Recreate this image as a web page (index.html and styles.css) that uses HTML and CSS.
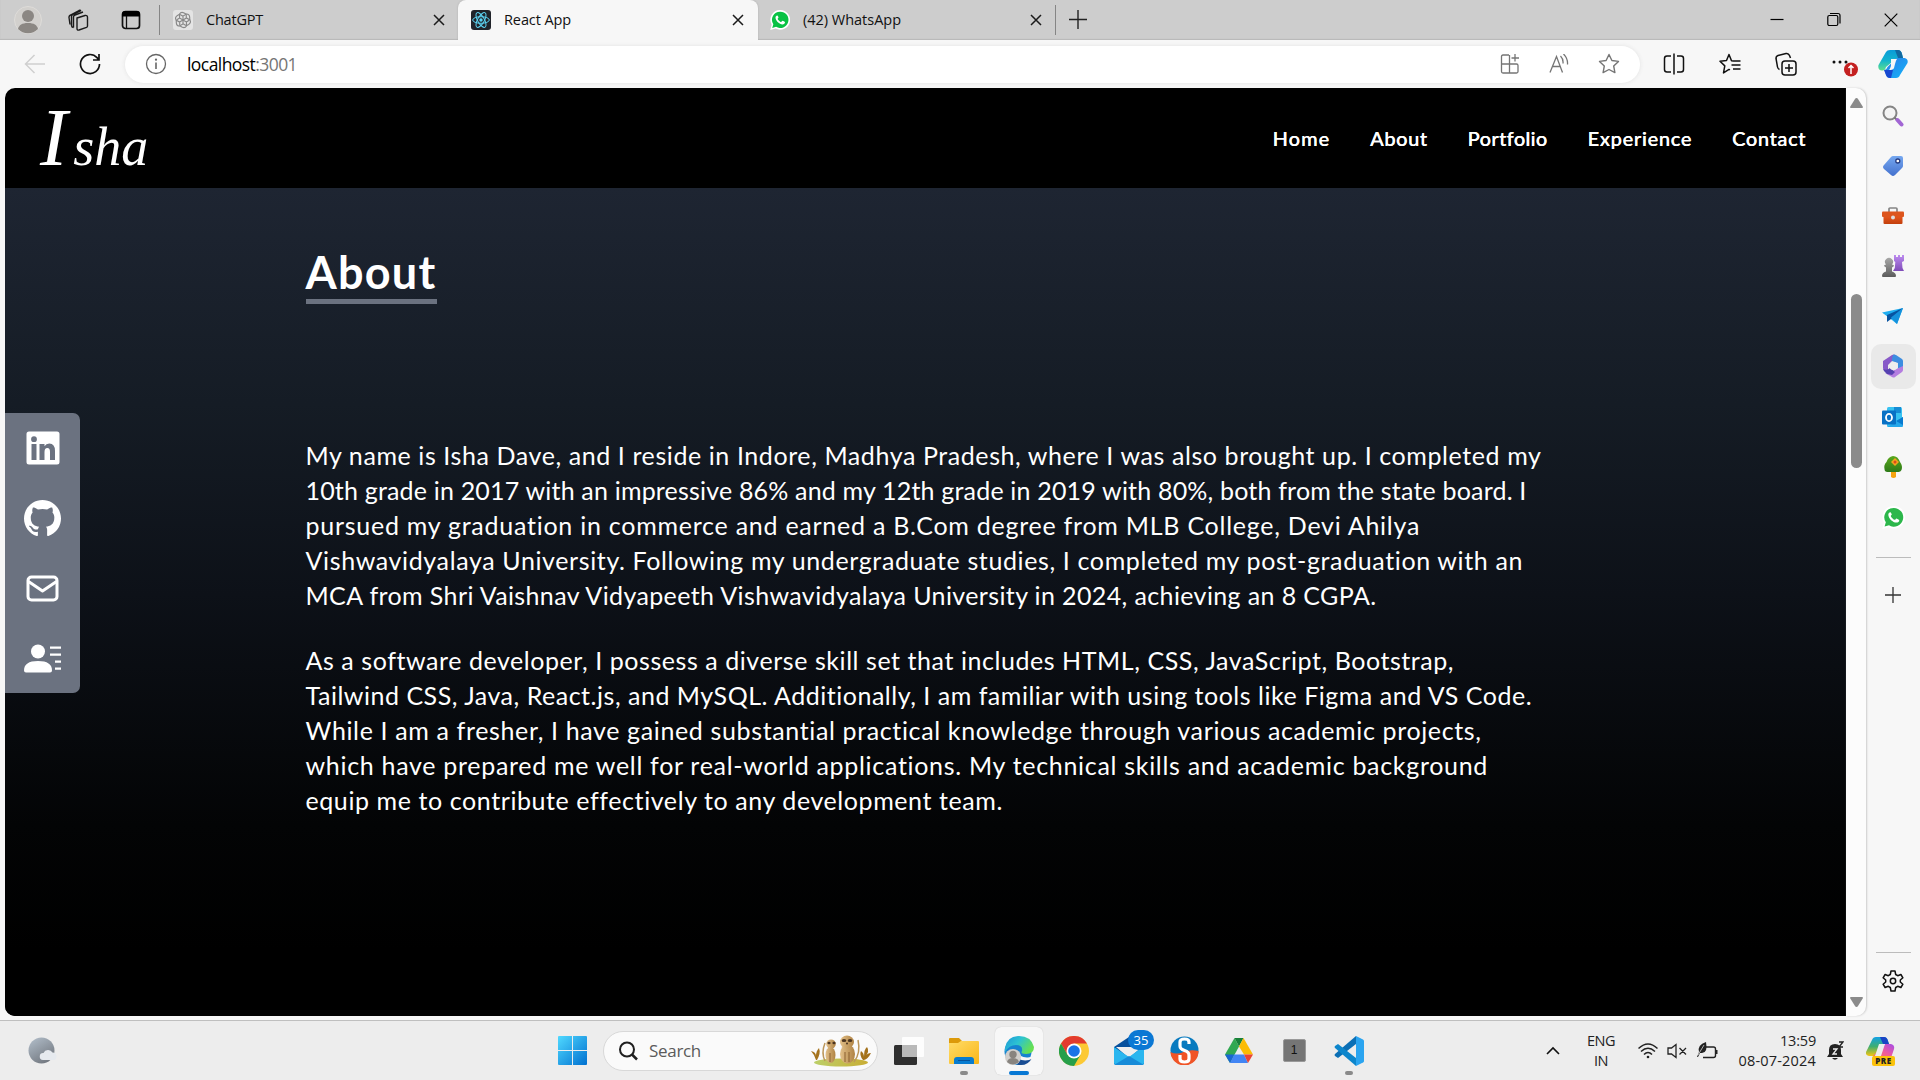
FILE: index.html
```html
<!DOCTYPE html>
<html lang="en">
<head>
<meta charset="utf-8">
<title>React App</title>
<link rel="stylesheet" href="styles.css">
</head>
<body>
<svg class="defs" width="0" height="0" aria-hidden="true">
  <defs>
    <linearGradient id="gBlue" x1="0" y1="0" x2="1" y2="1"><stop offset="0" stop-color="#50d9ff"/><stop offset="1" stop-color="#0070d0"/></linearGradient>
    <linearGradient id="gCop1" x1="0" y1="0" x2="0" y2="1"><stop offset="0" stop-color="#0a9bd8"/><stop offset=".5" stop-color="#12b3cf"/><stop offset="1" stop-color="#5fe08a"/></linearGradient>
    <linearGradient id="gCop2" x1="0" y1="0" x2="1" y2="1"><stop offset="0" stop-color="#2a7be8"/><stop offset="1" stop-color="#14b4f8"/></linearGradient>
    <linearGradient id="gPre1" x1="0" y1="0" x2="0" y2="1"><stop offset="0" stop-color="#12a0e4"/><stop offset=".5" stop-color="#3fae70"/><stop offset="1" stop-color="#f5c510"/></linearGradient>
    <linearGradient id="gPre2" x1="1" y1="0" x2="0" y2="1"><stop offset="0" stop-color="#a34be8"/><stop offset=".5" stop-color="#ee5aa0"/><stop offset="1" stop-color="#ff7a50"/></linearGradient>
    <linearGradient id="gTag" x1="0" y1="0" x2="0" y2="1"><stop offset="0" stop-color="#76a8f0"/><stop offset="1" stop-color="#4471ce"/></linearGradient>
    <linearGradient id="gBox" x1="0" y1="0" x2="0" y2="1"><stop offset="0" stop-color="#ea5a20"/><stop offset="1" stop-color="#c23f0c"/></linearGradient>
    <linearGradient id="gPawn" x1="0" y1="0" x2="0" y2="1"><stop offset="0" stop-color="#a8a8a8"/><stop offset="1" stop-color="#5c5c5c"/></linearGradient>
    <linearGradient id="gRook" x1="0" y1="0" x2="0" y2="1"><stop offset="0" stop-color="#bd8cf0"/><stop offset="1" stop-color="#7f4cb8"/></linearGradient>
    <linearGradient id="gMoon" x1="0" y1="0" x2=".6" y2="1"><stop offset="0" stop-color="#b4c0cc"/><stop offset="1" stop-color="#747a82"/></linearGradient>
    <linearGradient id="gFold" x1="0" y1="0" x2="1" y2="1"><stop offset="0" stop-color="#ffdc68"/><stop offset="1" stop-color="#f9b617"/></linearGradient>
    <linearGradient id="gEdge" x1="0" y1="0" x2="1" y2=".5"><stop offset="0" stop-color="#1d94d8"/><stop offset=".5" stop-color="#2cc3d2"/><stop offset="1" stop-color="#66e052"/></linearGradient>
    <linearGradient id="gTree" x1="0" y1="0" x2="0" y2="1"><stop offset="0" stop-color="#5aa81c"/><stop offset="1" stop-color="#2d7a18"/></linearGradient>
    <linearGradient id="gGrass" x1="0" y1="0" x2="1" y2="0"><stop offset="0" stop-color="#bcd06a"/><stop offset="1" stop-color="#c9ad35"/></linearGradient>
    <linearGradient id="gFur" x1="0" y1="0" x2="1" y2="0"><stop offset="0" stop-color="#e2c08a"/><stop offset="1" stop-color="#b08344"/></linearGradient>
    <symbol id="whatsapp" viewBox="0 0 24 24"><path fill="#fff" d="M12.3 0A11.700 11.700 0 0 0 2 17.500L.3 24l6.500-1.800A11.800 11.800 0 1 0 12.300 0z"/><path fill="currentColor" d="M12.300 2A9.700 9.700 0 0 0 4 17l-1.300 4.500L7.300 20.200A9.800 9.800 0 1 0 12.300 2z"/><path fill="#fff" d="M8.700 6.600c-.7-.2-2.200 1-2.100 2.700.3 3.800 4.700 7.800 8.300 8 1.800 0 3.200-1.100 3.100-2.500-.1-.6-2.500-1.800-3-1.800-.6 0-1 1.400-1.600 1.400-1.200 0-4.200-2.800-4.200-4 0-.5 1-1 1-1.500S9.200 6.700 8.700 6.600z"/></symbol>
    <symbol id="close" viewBox="0 0 14 14"><path d="M2 2l10 10M12 2L2 12" fill="none" stroke="#1b1b1b" stroke-width="1.500"/></symbol>
  </defs>
</svg>

<div class="window">
  <header class="tabs">
    <div class="tab-tools">
      <svg width="28" height="28" viewBox="0 0 28 28"><circle cx="14" cy="14" r="13.500" fill="#d2d0cd" stroke="#dedcd9"/><circle cx="14" cy="10" r="6" fill="#8b8783"/><path d="M4 23c1-4 4-6 10-6s9 2 10 6a14 14 0 0 1-20 0z" fill="#8b8783"/></svg>
      <svg width="22" height="22" viewBox="0 0 22 22" fill="none" stroke="#1b1b1b" stroke-width="1.400"><path d="M10 9l8-2.500q2.500-.5 2.500 1.800V17q0 1-1 1.400L12 21q-2 .5-2-1.500zM6.500 18.500V8q0-1.500 1.500-2l8-3M3 15.500l-1-7q-.2-1.700 1.500-2.500L12 1.500q1-.5 2 .3M6.500 18.500q-2-.2-2-2V7.500Q4.500 6 6 5.300L14 1.500"/></svg>
      <svg width="20" height="20" viewBox="0 0 20 20"><rect x="1.500" y="1.500" width="17" height="17" rx="3" fill="none" stroke="#111" stroke-width="1.700"/><path d="M1 6.500V4q0-3 3-3h12q3 0 3 3v2.500z" fill="#000"/><path d="M5.500 6v12" stroke="#111" stroke-width="1.300"/></svg>
    </div>
    <div class="tab tab-first">
      <svg width="20" height="20" viewBox="0 0 20 20"><rect width="20" height="20" rx="3" fill="#e4e4e4"/><g fill="none" stroke="#888" stroke-width="1.150" id="petals"><path id="petal" d="M10 10V6l3.500-2q3 0 3.200 3.400V10M10 6.200L7 4.500"/><use href="#petal" transform="rotate(60 10 10)"/><use href="#petal" transform="rotate(120 10 10)"/><use href="#petal" transform="rotate(180 10 10)"/><use href="#petal" transform="rotate(240 10 10)"/><use href="#petal" transform="rotate(300 10 10)"/></g></svg>
      <span class="tab-title"><span data-w="57">ChatGPT</span></span>
      <svg width="14" height="14"><use href="#close"/></svg>
    </div>
    <div class="tab tab-active">
      <svg width="20" height="20" viewBox="0 0 20 20"><rect width="20" height="20" rx="3" fill="#20232a"/><g fill="none" stroke="#5bd3f3" stroke-width="1"><ellipse cx="10" cy="10" rx="8.300" ry="3.300"/><ellipse cx="10" cy="10" rx="8.300" ry="3.300" transform="rotate(60 10 10)"/><ellipse cx="10" cy="10" rx="8.300" ry="3.300" transform="rotate(120 10 10)"/></g><circle cx="10" cy="10" r="1.700" fill="#5bd3f3"/></svg>
      <span class="tab-title"><span data-w="67">React App</span></span>
      <svg width="14" height="14"><use href="#close"/></svg>
    </div>
    <div class="tab tab-last">
      <svg class="wa" width="20" height="20"><use href="#whatsapp"/></svg>
      <span class="tab-title"><span data-w="98">(42) WhatsApp</span></span>
      <svg width="14" height="14"><use href="#close"/></svg>
    </div>
    <svg class="new-tab" width="20" height="20" viewBox="0 0 20 20"><path d="M1 9.500h18M10 0v19" stroke="#222" stroke-width="1.400"/></svg>
    <div class="controls">
      <svg width="14" height="18" viewBox="0 0 14 18"><path d="M.5 8.500h13" stroke="#000" stroke-width="1.200"/></svg>
      <svg width="14" height="18" viewBox="0 0 14 18" fill="none" stroke="#000" stroke-width="1.200"><rect x=".8" y="4.500" width="10" height="10" rx="1.500"/><path d="M3 2.500h8q2 0 2 2v8"/></svg>
      <svg width="14" height="18" viewBox="0 0 14 18"><path d="M.7 2.700l12.600 12.600M13.300 2.700L.7 15.300" stroke="#000" stroke-width="1.200"/></svg>
    </div>
  </header>

  <div class="toolbar">
    <svg class="back" width="22" height="20" viewBox="0 0 22 20" fill="none" stroke="#cfcfcf" stroke-width="1.500"><path d="M21 10H1.500M10.500 1l-9 9 9 9"/></svg>
    <svg class="reload" width="22" height="22" viewBox="0 0 22 22" fill="none" stroke="#111" stroke-width="1.700"><path d="M20.500 11A9.500 9.500 0 1 1 18 4.600L20 7M20 1v6h-6"/></svg>
    <div class="address">
      <svg width="22" height="22" viewBox="0 0 22 22" fill="none" stroke="#666" stroke-width="1.300"><circle cx="11" cy="11" r="9.500"/><path d="M11 9.500V16" stroke-width="1.600"/><circle cx="11" cy="6.700" r=".5"/></svg>
      <span class="url"><span data-w="110">localhost<i>:3001</i></span></span>
      <span class="address-icons">
        <svg width="20" height="20" viewBox="0 0 20 20" fill="none" stroke="#757575" stroke-width="1.300"><path d="M9 1H3Q1.500 1 1.500 2.500v15Q1.500 19 3 19h13.500q1.500 0 1.500-1.500v-6q0-1.500-1.500-1.500h-15M9.500 1v18M15 0v7.500M11.500 4h7.500"/></svg>
        <svg width="20" height="20" viewBox="0 0 20 20" fill="none" stroke="#757575" stroke-width="1.300"><path d="M1 18.500L7.500 2.500l6 16M3.500 12.500h8M11.500 2q3 3 2.500 7.500M14.500 0q4.500 4.500 4 10.500"/></svg>
        <svg width="22" height="22" viewBox="0 0 22 22" fill="none" stroke="#757575" stroke-width="1.400" stroke-linejoin="round"><path d="M11 1.500l2.900 6 6.600.9-4.800 4.600 1.200 6.600-5.900-3.100-5.900 3.100L6.300 13 1.500 8.400l6.600-.9z"/></svg>
      </span>
    </div>
    <div class="actions">
      <svg width="22" height="22" viewBox="0 0 22 22" fill="none" stroke="#111" stroke-width="1.500"><path d="M8 3H4Q1.500 3 1.500 5.500v11Q1.500 19 4 19h4M14 3h4q2.500 0 2.500 2.500v11Q20.500 19 18 19h-4M11 .500v21"/></svg>
      <svg width="22" height="22" viewBox="0 0 22 22" fill="none" stroke="#111" stroke-width="1.500" stroke-linejoin="round"><path d="M14.500 8l-2-.3L10 1.500 7.500 7.500l-6.500.8 4.800 4.600-1.300 7 5.500-3.500 1 .5M14 8h7.500M12.500 12h9M14 16h7.500"/></svg>
      <svg width="22" height="24" viewBox="0 0 22 24" fill="none" stroke="#111" stroke-width="1.500"><rect x="7" y="9" width="14" height="14" rx="3"/><path d="M14 12v8M10 16h8M4.500 17.500q-1.700-.7-2-2.500L1 6.500Q.8 4.300 3 3.500l8-2q2.500-.5 3.500 2L15.500 6"/></svg>
      <svg class="more" width="30" height="30" viewBox="0 0 30 30"><g fill="#111"><circle cx="6" cy="13" r="1.500"/><circle cx="12" cy="13" r="1.500"/><circle cx="18" cy="13" r="1.500"/></g><circle cx="23" cy="20.500" r="7" fill="#c42020"/><path d="M23 25v-8M20.500 19l2.500-2.500 2.500 2.500" fill="none" stroke="#fff" stroke-width="1.500"/></svg>
      <svg width="30" height="30" viewBox="0 0 30 30"><path d="M8 3Q9 1 12 1h8q3 0 4 4l1 4h-6L8 18q-1 4-4 3.500Q-.5 21 .500 16z" fill="url(#gCop1)"/><path d="M17 1h3q3 0 4 4l1 4h-5z" fill="#1168a0"/><path d="M22 26q-1 3-4 3H12q-3 0-4-3L6.500 21q2 0 3-3l9-9h8q4 1 3 5z" fill="url(#gCop2)"/><path d="M6 21h9l-2 8h-1q-3 0-4-3z" fill="#1748d0"/><path d="M13 10h6q-1 1-2 5l-1 4q-1 2-5 2 1-1 2-4z" fill="#f7f7f7"/></svg>
    </div>
  </div>

  <div class="body">
    <main class="page">
      <nav class="navbar">
        <div class="logo"><span class="logo-cap">I</span><span>sha</span></div>
        <ul class="links">
          <li data-w="57.5">Home</li><li data-w="57.500">About</li><li data-w="79.500">Portfolio</li><li data-w="104.500">Experience</li><li data-w="74">Contact</li>
        </ul>
      </nav>
      <section class="about">
        <aside class="social">
          <a><svg width="34" height="34" viewBox="0 0 34 34"><path fill="#fff" fill-rule="evenodd" d="M3 .500h28q2.500 0 2.500 2.500v28q0 2.500-2.500 2.500H3Q.5 33.500.5 31V3Q.5.5 3 .500zM5.500 13v16h5V13zM8 5.300a2.900 2.900 0 1 0 0 5.800 2.900 2.900 0 0 0 0-5.800zM13.500 13v16h5v-8q0-4 2.800-4t2.700 4v8h5v-9q0-7.500-5.700-7.500-3.300 0-4.800 2.700V13z"/></svg></a>
          <a><svg width="37" height="37" viewBox="0 0 16 16"><path fill="#fff" d="M8 0C3.580 0 0 3.580 0 8c0 3.540 2.290 6.530 5.470 7.590.4.070.55-.17.55-.38 0-.19-.01-.82-.01-1.490-2.010.37-2.530-.49-2.690-.94-.09-.23-.48-.94-.82-1.130-.28-.15-.68-.52-.01-.53.63-.01 1.080.58 1.230.82.72 1.210 1.870.87 2.330.66.070-.52.28-.87.510-1.070-1.780-.2-3.640-.89-3.640-3.950 0-.87.310-1.590.82-2.150-.08-.2-.36-1.020.08-2.120 0 0 .67-.21 2.200.82.64-.18 1.320-.27 2-.27s1.360.09 2 .27c1.530-1.040 2.200-.82 2.200-.82.440 1.100.16 1.920.08 2.120.51.56.82 1.270.82 2.150 0 3.070-1.870 3.750-3.650 3.950.29.25.54.73.54 1.480 0 1.070-.01 1.930-.01 2.200 0 .21.15.46.55.38A8.010 8.010 0 0 0 16 8c0-4.420-3.580-8-8-8z"/></svg></a>
          <a><svg width="33" height="27" viewBox="0 0 33 27" fill="none" stroke="#fff" stroke-width="3" stroke-linejoin="round"><rect x="2" y="2" width="29" height="23" rx="3.500"/><path d="M2.500 6.500L16.500 16l14-9.500"/></svg></a>
          <a><svg width="37" height="29" viewBox="0 0 37 29" fill="#fff"><circle cx="14" cy="7.500" r="7"/><path d="M0 26.500Q0 17 14 17t14 9.500q0 2-2 2H2q-2 0-2-2zM26 2.500h11v2.300H26zM26 9.500h11v2.300H26zM31 16.500h6v2.300h-6zM31 23.500h6v2.300h-6z"/></svg></a>
        </aside>
        <div class="container">
          <h1><span data-w="131">About</span></h1>
          <p>
            <span data-w="1236">My name is Isha Dave, and I reside in Indore, Madhya Pradesh, where I was also brought up. I completed my</span>
            <span data-w="1221">10th grade in 2017 with an impressive 86% and my 12th grade in 2019 with 80%, both from the state board. I</span>
            <span data-w="1115">pursued my graduation in commerce and earned a B.Com degree from MLB College, Devi Ahilya</span>
            <span data-w="1218">Vishwavidyalaya University. Following my undergraduate studies, I completed my post-graduation with an</span>
            <span data-w="1071">MCA from Shri Vaishnav Vidyapeeth Vishwavidyalaya University in 2024, achieving an 8 CGPA.</span>
          </p>
          <p>
            <span data-w="1148">As a software developer, I possess a diverse skill set that includes HTML, CSS, JavaScript, Bootstrap,</span>
            <span data-w="1227">Tailwind CSS, Java, React.js, and MySQL. Additionally, I am familiar with using tools like Figma and VS Code.</span>
            <span data-w="1177">While I am a fresher, I have gained substantial practical knowledge through various academic projects,</span>
            <span data-w="1183">which have prepared me well for real-world applications. My technical skills and academic background</span>
            <span data-w="697">equip me to contribute effectively to any development team.</span>
          </p>
        </div>
      </section>
    </main>
    <div class="scrollbar">
      <svg width="13" height="10" viewBox="0 0 13 10"><path d="M6.500 0q1 0 1.500 1l5 8q0 1-1 1H1q-1 0-1-1l5-8q.5-1 1.500-1z" fill="#8b8b8b"/></svg>
      <div class="thumb"></div>
      <svg class="down" width="13" height="10" viewBox="0 0 13 10"><path d="M6.500 10q1 0 1.500-1l5-8q0-1-1-1H1Q0 0 0 1l5 8q.5 1 1.500 1z" fill="#8b8b8b"/></svg>
    </div>
    <aside class="sidebar">
      <a><svg width="22" height="22" viewBox="0 0 22 22"><circle cx="8" cy="8" r="6.500" fill="#f4f4f4" stroke="#858585" stroke-width="2"/><path d="M12.500 12.500l3 3" stroke="#777" stroke-width="2"/><path d="M15.500 15l4 4.500" stroke="#a266d4" stroke-width="4" stroke-linecap="round"/></svg></a>
      <a><svg width="22" height="22" viewBox="0 0 22 22"><path d="M11 1h8q2 0 2 2v8q0 1-1 2l-7 7q-2 2-4 0L2 14q-2-2 0-4l7-8q1-1 2-1z" fill="url(#gTag)"/><circle cx="15.800" cy="6" r="2" fill="#fff" stroke="#273c80" stroke-width="1.300"/></svg></a>
      <a><svg width="22" height="20" viewBox="0 0 22 20"><path d="M7 6V3q0-1 1-1h6q1 0 1 1v3" fill="none" stroke="#858585" stroke-width="1.700"/><rect x="1.500" y="9" width="19" height="9" rx="1" fill="url(#gBox)"/><rect y="5.500" width="22" height="5.500" rx="1" fill="#dd551d"/><circle cx="11" cy="11.500" r="2" fill="#ddd"/></svg></a>
      <a><svg width="22" height="24" viewBox="0 0 22 24"><path d="M12 1h2v2h2V1h2v2h2V1h2v6l-2 1 .5 6 1.500 3H11l1.800-3 .5-6L12 7z" fill="url(#gRook)"/><path d="M2 12q0-1.500 2-1.500a4 4 0 1 1 6 0q2 0 2 1.500l-2 1.500v4q4 1 4 4.500 0 1-1 1H1q-1 0-1-1 0-3.500 4-4.500v-4z" fill="url(#gPawn)"/></svg></a>
      <a><svg width="22" height="18" viewBox="0 0 22 18"><path d="M0 5.500L21 1l-6 16-5-4z" fill="#20aef0"/><path d="M21 1L5 8v7l4-3z" fill="#0753a0"/><path d="M21 1L9 10.500l6 6.500z" fill="#1591dc"/></svg></a>
      <a class="selected"><svg width="22" height="24" viewBox="0 0 22 24"><path d="M1 7l9-6q2-1 3 0l-3 6-4 4v8l-4-3q-1-1-1-2z" fill="#8759c8"/><path d="M11 1q1-1 3 0l6 4q1 1 1 2v9l-5-2V9l-6-2q0-4 1-6z" fill="#3c8de0"/><path d="M21 12v4q0 1-1 2l-7 5q-1 1-3 0l-7-4q6 1 9-3z" fill="#b47de0"/><path d="M1 15q4 2 7-1l5 4-3 3-5-1-3-3z" fill="#5541b0"/><circle cx="11.500" cy="12" r="4" fill="#eee"/></svg></a>
      <a><svg width="22" height="22" viewBox="0 0 22 22"><rect x="5" y="1" width="15" height="20" rx="1.500" fill="#37c2f1"/><path d="M12 1h7v6h-7z" fill="#168cd5"/><path d="M21 11v9q0 1-1 1H5l9-5z" fill="#25a7ea"/><path d="M21 11v8l-7-4z" fill="#087ad0"/><rect x="0" y="4.500" width="14" height="14" rx="1" fill="#0871c5"/><ellipse cx="7" cy="11.500" rx="3" ry="3.600" fill="none" stroke="#fff" stroke-width="1.800"/></svg></a>
      <a><svg width="20" height="22" viewBox="0 0 20 22"><path d="M8 15h5v6q-2.500 2-5 0z" fill="#f5a30f"/><path d="M10 0q5 0 7 6 3 4 1.500 8-1 2-3 2h-11q-3 0-3-3-1-4 2-7Q5 1 10 0z" fill="url(#gTree)"/><path d="M12 2l4 4-4 4-4-4z" fill="#f5a31d"/><circle cx="12" cy="6" r="1.500" fill="#db4a1c"/></svg></a>
      <a class="wa2"><svg width="23" height="23"><use href="#whatsapp"/></svg></a>
      <hr>
      <a class="add"><svg width="16" height="16" viewBox="0 0 16 16"><path d="M0 8h16M8 0v16" stroke="#333" stroke-width="1.300"/></svg></a>
      <div class="sidebar-end">
        <hr>
        <a><svg width="22" height="22" viewBox="0 0 22 22" fill="none" stroke="#111" stroke-width="1.500" stroke-linejoin="round"><path d="M9 1h4l.7 3.500 2 1.200 3.200-1.200 2 3.300-2.600 2.200v2l2.600 2.200-2 3.300-3.200-1.200-2 1.200L13 21H9l-.7-3.500-2-1.200-3.200 1.200-2-3.300L3.700 12v-2L1.100 7.800l2-3.300 3.200 1.200 2-1.200z"/><circle cx="11" cy="11" r="2.700"/></svg></a>
      </div>
    </aside>
  </div>

  <footer class="taskbar">
    <svg class="weather" width="30" height="28" viewBox="0 0 30 28"><circle cx="13.500" cy="13.500" r="13" fill="url(#gMoon)"/><path d="M15 23a3.500 3.500 0 0 1 .5-7 5 5 0 0 1 9-.5q4 0 4 4T25 23z" fill="#e6eaef"/></svg>
    <svg class="start" width="29" height="29" viewBox="0 0 29 29"><path d="M0 1q0-1 1-1h13v14H0zM15 0h13q1 0 1 1v13H15zM0 15h14v14H1q-1 0-1-1zM15 15h14v13q0 1-1 1H15z" fill="url(#gBlue)"/></svg>
    <div class="search">
      <svg width="20" height="20" viewBox="0 0 20 20" fill="none" stroke="#1f1f1f" stroke-width="2"><circle cx="9" cy="8.500" r="7"/><path d="M14 13.500l5 5" stroke-width="2.500"/></svg>
      <span class="search-label"><span data-w="52">Search</span></span>
      <svg class="meerkats" width="62" height="32" viewBox="0 0 62 32"><ellipse cx="31" cy="27.500" rx="27" ry="4" fill="url(#gGrass)"/><path d="M15 26q-4-8 0-18M44 27q7-9 4-22" fill="none" stroke="#bb965a" stroke-width="1.500"/><g fill="url(#gFur)"><ellipse cx="20.500" cy="20" rx="5" ry="8"/><ellipse cx="21" cy="9" rx="4.800" ry="4.500"/><ellipse cx="37.500" cy="19" rx="7.500" ry="9.500"/><ellipse cx="37" cy="7" rx="7" ry="6.500"/></g><g fill="#4c3520"><ellipse cx="19" cy="8" rx="1.600" ry="1.200"/><ellipse cx="24" cy="8" rx="1.600" ry="1.200"/><ellipse cx="34" cy="5.500" rx="2.300" ry="1.500"/><ellipse cx="40" cy="5.500" rx="2.300" ry="1.500"/><circle cx="37" cy="8.500" r="1"/></g><g stroke="#8b6131" stroke-width="1" fill="none"><path d="M35 17v10M39 17v10M20 18v9"/></g><g fill="#a4721c"><path d="M6 25Q4 19 1 16q5 1 5 5 0-5 3-8 2 5-2 12zM53 25q-4-5-2-9 3 2 3 6 0-8 3-10 3 4-2 10 2-4 6-4-3 6-7 7z"/></g></svg>
    </div>
    <div class="apps">
      <a><svg width="30" height="28" viewBox="0 0 30 28"><rect y="8" width="23" height="20" rx="1.500" fill="#2f2f2f"/><rect x="8" y="0" width="22" height="20" rx="1" fill="#fdfdfd"/><path d="M8 8h15v12H8z" fill="#b9b9b9"/></svg></a>
      <a class="running"><svg width="30" height="28" viewBox="0 0 30 28"><path d="M0 2q0-1 1-1h9l3 3v4H0z" fill="#dc9a0a"/><path d="M0 6h9l3-2h17q1 0 1 1v21q0 1-1 1H1q-1 0-1-1z" fill="url(#gFold)"/><path d="M5 27v-4q0-3 3-3h14q3 0 3 3v4z" fill="#087cd0"/><path d="M9 23.500h12" stroke="#07539a"/></svg></a>
      <a class="current"><svg width="30" height="30" viewBox="0 0 30 30"><circle cx="14" cy="15.500" r="13.500" fill="#1683d0"/><path d="M1 12Q3 0 15 0t15 11q0 7-8 7-6 0-4-3 1-6-6-6-7 0-11 7z" fill="url(#gEdge)"/><path d="M15 15q-2 5 5 7 4 1 8 0-4 8-13 7-8-2-8-9t8-5z" fill="#194d93"/><path d="M15 15q0 7 9 6.500 4-.5 6-2l-1 3q-8 4-15 0z" fill="#f7f7f7"/><circle cx="9" cy="21" r="8" fill="#d1cfcc"/><circle cx="9" cy="18.500" r="3.700" fill="#88847f"/><path d="M3 26q1-4 6-4t6 4q-6 5-12 0z" fill="#88847f"/></svg></a>
      <a><svg width="30" height="30" viewBox="0 0 30 30"><circle cx="15" cy="15" r="15" fill="#fcc934"/><path d="M2 7.500A15 15 0 0 1 28 7.500H15L8.500 18.700z" fill="#e33b2e"/><path d="M2 7.500A15 15 0 0 0 15 30l6.500-11.300H8.500z" fill="#269f4a"/><circle cx="15" cy="15" r="7.500" fill="#fff"/><circle cx="15" cy="15" r="5.800" fill="#1a73e8"/></svg></a>
      <a class="mail"><svg width="30" height="28" viewBox="0 0 30 28"><path d="M0 10L15 0l15 10v17H0z" fill="#064f9c"/><path d="M2 10h26L15 21z" fill="#eee"/><path d="M0 10l15 10L30 9v17q0 2-2 2H2q-2 0-2-2z" fill="#2ab6ef"/><path d="M0 28l15-9 15 9z" fill="#178bd8"/></svg><b>35</b></a>
      <a><svg width="29" height="29" viewBox="0 0 29 29"><circle cx="14.500" cy="14.500" r="14" fill="#087abf"/><path d="M.500 16q6 3 13 0t15-1a14 14 0 0 1-28 1z" fill="#f05426"/><path d="M19 8V6q0-3-4.500-3T10 6v4q0 3 4.500 4.500T19 19v4q0 3-4.500 3T10 23v-4" fill="none" stroke="#fff" stroke-width="3.200"/></svg></a>
      <a><svg width="28" height="26" viewBox="0 0 28 26"><path d="M9.500 0L0 16.500 5 25 14 8.500z" fill="#31a852"/><path d="M9.500 0h9l-4.500 8.500z" fill="#188038"/><path d="M18.500 0L28 16.500h-9L14 8.500z" fill="#fbbc04"/><path d="M5 25l4-8.500h10l4 8.500z" fill="#4285f4"/><path d="M9 16.500L5 25l-5-8.500z" fill="#1967d2"/><path d="M19 16.500h9L23 25z" fill="#ea4335"/></svg></a>
      <a><span class="box">1</span></a>
      <a class="running"><svg width="30" height="30" viewBox="0 0 30 30"><path d="M22 8L4 22 1 20q-1-1 0-2L22 0z" fill="#0b6fb5"/><path d="M22 22L4 8 1 10q-1 1 0 2L22 30z" fill="#0d86cc"/><path d="M22 0l7 3.500q1 .5 1 1.500v20q0 1-1 1.500L22 30z" fill="#2aa4f0"/></svg></a>
    </div>
    <div class="tray">
      <svg class="chev" width="14" height="9" viewBox="0 0 14 9"><path d="M1 8l6-6 6 6" fill="none" stroke="#111" stroke-width="1.600"/></svg>
      <div class="lang"><span data-w="28">ENG</span><br><span data-w="14">IN</span></div>
      <svg class="wifi" width="20" height="16" viewBox="0 0 20 16" fill="none" stroke="#222" stroke-width="1.500"><path d="M.5 5.500q9.500-9 19 0M3 8.500q7-6.500 14 0M6 11.500q4-4 8 0"/><circle cx="10" cy="14" r="1.300" fill="#222" stroke="none"/></svg>
      <svg class="vol" width="20" height="16" viewBox="0 0 20 16" fill="none" stroke="#222" stroke-width="1.300"><path d="M1 5h3.500L9 1.500v13L4.500 11H1zM12.500 5l6.500 6.500M19 5l-6.500 6.500"/></svg>
      <svg class="batt" width="22" height="18" viewBox="0 0 22 18"><path d="M9 5h7.500q2 0 2 2v6.500q0 2-2 2H6" fill="none" stroke="#222" stroke-width="1.400"/><path d="M19 8h1.500v4H19zM9 0q2 11-4 11H3L1 15H0l2-5Q0 3 9 0z" fill="#222"/><path d="M7 3L1 13" stroke="#eee" stroke-width=".7"/></svg>
      <div class="clock"><span data-w="36">13:59</span><br><span data-w="77.500">08-07-2024</span></div>
      <svg class="bell" width="17" height="20" viewBox="0 0 17 20"><path d="M0 16l2-3V9q0-6 6-6t6 6v4l2 3zM5 17h6q-3 3.500-6 0z" fill="#222"/><path d="M6 8h4l-4 5h4" fill="none" stroke="#eee" stroke-width="1.300"/><path d="M12 1h4l-4 5h4" fill="none" stroke="#222" stroke-width="1.400"/></svg>
      <div class="copilot"><svg width="29" height="28" viewBox="0 0 29 28"><path d="M6 3q1-3 4-3h8q3 0 4 4l1 3h-6L9 19H3q-4-1-3-4z" fill="url(#gPre1)"/><path d="M14 0h4q3 0 4 4l1 3h-6z" fill="#1944c4"/><path d="M7 19l12-12h6q4 1 3 5l-3 9H10q-3 0-3-2z" fill="url(#gPre2)"/><path d="M13 7h6l-4 12H9z" fill="#ededed"/></svg><b>PRE</b></div>
    </div>
  </footer>
</div>
<script src="fit.js"></script>
</body>
</html>
```
FILE: styles.css
```css
* { box-sizing: border-box; }
body { margin: 0; overflow: hidden; font-family: "Open Sans", "Noto Sans", sans-serif; color: #111; }
svg { display: block; flex: none; }
.defs { position: absolute; }
[data-w] { white-space: nowrap; }
.window { width: 1920px; height: 1080px; display: flex; flex-direction: column; background: #f7f7f7; }

/* tab strip */
.tabs { height: 40px; flex: none; display: flex; align-items: center; background: #cdcdcd; box-shadow: inset 0 -1px 1px #b8b8b8; }
.tab-tools { width: 160px; height: 30px; display: flex; align-items: center; padding-left: 14px; gap: 24px; border-right: 1px solid #858585; }
.tab-tools svg:last-child { margin-left: 8px; }
.tab-tools svg:nth-child(2) { margin-left: 1px; }
.tab { height: 40px; display: flex; align-items: center; font-size: 14.5px; }
.tab-title { flex: 1; padding-left: 13px; line-height: 20px; }
.tab-first { width: 298px; padding: 0 12px 0 13px; }
.tab-active { width: 300px; padding: 0 13px; background: #f7f7f7; border-radius: 8px 8px 0 0; box-shadow: 0 0 2px #aaa; }
.tab-last { width: 298px; height: 30px; padding: 0 12px; border-right: 1px solid #858585; }
.wa { color: #08c244; }
.new-tab { margin-left: 12px; }
.controls { margin-left: auto; display: flex; gap: 43px; padding-right: 22px; }

/* toolbar */
.toolbar { height: 48px; flex: none; display: flex; align-items: center; background: #f7f7f7; padding: 0 12px 0 24px; }
.reload { margin-left: 33px; }
.address { width: 1515px; height: 37px; margin-left: 24px; padding: 0 20px; border-radius: 19px; background: #fff; box-shadow: 0 0 4px #e2e2e2; display: flex; align-items: center; }
.url { flex: 1; padding-left: 20px; font-size: 17.5px; color: #000; }
.url i { font-style: normal; color: #757575; }
.address-icons { display: flex; align-items: center; gap: 29px; }
.actions { flex: 1; display: flex; align-items: center; padding-left: 23px; gap: 34px; }
.actions .more { margin-left: -3px; margin-right: -14px; }

/* browser body */
.body { height: 932px; flex: none; display: flex; padding-left: 5px; padding-bottom: 4px; }
.page { width: 1841px; height: 928px; border-radius: 10px 0 0 10px; overflow: hidden; display: flex; flex-direction: column; background: #000; }
.scrollbar { width: 20px; height: 928px; background: #fcfcfc; border-radius: 0 10px 10px 0; box-shadow: 1px 0 2px #ccc; display: flex; flex-direction: column; align-items: center; padding: 10px 0 9px; }
.thumb { width: 11px; height: 174px; margin-top: 186px; border-radius: 6px; background: #8b8b8b; }
.down { margin-top: auto; }

.navbar { height: 100px; flex: none; display: flex; align-items: center; justify-content: space-between; padding: 0 40px 0 35px; color: #fff; }
.logo { display: flex; align-items: baseline; height: 88px; font: italic 54px/88px "Liberation Serif", serif; }
.logo-cap { font-size: 82px; padding-right: 6px; }
.links { display: flex; gap: 40px; list-style: none; margin: 0; padding: 0; font: 500 20px/28px "Lato", sans-serif; text-shadow: 0.3px 0 #fff; }

.about { flex: 1; display: flex; align-items: flex-start; background: linear-gradient(#1e2532, #151c25 26%, #0d1118 49%, #030405 77%, #000 92%); color: #fff; }
.social { width: 75px; margin-top: 225px; background: #6b7280; border-radius: 0 7px 7px 0; }
.social a { height: 70px; display: flex; align-items: center; justify-content: center; }
.container { width: 1240px; margin-left: 225.5px; padding-top: 57px; font: 25px/35px "Lato", sans-serif; }
h1 { width: 131px; height: 59px; margin: 0 0 134px; border-bottom: 5px solid #6b7280; font: 700 45px/54px "Lato", sans-serif; }
.container p { margin: 0 0 30px; }
.container p span { display: block; width: fit-content; }

.sidebar { flex: 1; display: flex; flex-direction: column; align-items: center; padding-top: 5px; }
.sidebar a { width: 45px; height: 45px; margin-bottom: 5.2px; flex: none; display: flex; align-items: center; justify-content: center; }
.selected { background: #e9e9e9; border-radius: 10px; }
.wa2 { color: #2cb74b; }
.sidebar hr { width: 35px; height: 1px; border: 0; margin: 12px 0; background: #bcbcbc; }
.sidebar .add { margin-top: 3px; }
.sidebar-end { margin-top: auto; display: flex; flex-direction: column; align-items: center; height: 64px; }
.sidebar-end hr { margin: 0 0 5px; }

/* taskbar */
.taskbar { height: 60px; flex: none; display: flex; align-items: center; background: #ededed; border-top: 1px solid #bfbfbf; }
.weather { margin-left: 28px; }
.start { margin-left: 500px; }
.search { width: 275px; height: 40px; margin-left: 16px; padding: 0 5px 0 14px; display: flex; align-items: center; background: #fafafa; border: 1px solid #d8d8d8; border-radius: 20px; }
.search-label { flex: 1; padding-left: 11px; font-size: 17px; color: #5b5b5b; }
.apps { display: flex; margin-left: 7px; gap: 7px; }
.apps a { position: relative; width: 48px; height: 48px; border-radius: 6px; display: flex; align-items: center; justify-content: center; }
.apps .current { background: #f7f7f7; box-shadow: 0 0 1px #bbb; }
.running::after, .current::after { content: ""; position: absolute; bottom: 0; width: 8px; height: 4px; border-radius: 2px; background: #8a8a8a; }
.current::after { width: 20px; background: #0878d4; }
.mail b { position: absolute; left: 23px; top: 3px; width: 26px; height: 20px; border-radius: 10px; background: #0b78d4; color: #fff; font-size: 13px; font-weight: 400; line-height: 20px; text-align: center; }
.box { width: 23px; height: 23px; background: #757575; border: 1px solid #999; border-radius: 2px; font: 12px/21px "Liberation Sans", sans-serif; text-align: center; }
.tray { flex: 1; display: flex; align-items: center; font-size: 14.5px; line-height: 20px; color: #222; }
.chev { margin-left: 173px; }
.lang { width: 50px; margin-left: 16px; text-align: center; }
.wifi { margin-left: 12px; }
.vol { margin-left: 9px; }
.batt { margin-left: 10px; }
.clock { width: 90px; margin-left: 7px; text-align: right; }
.bell { margin-left: 11px; }
.copilot { position: relative; margin-left: 22px; }
.copilot b { position: absolute; left: 6px; top: 19px; width: 23px; height: 10px; border-radius: 2px; background: #fbc20b; font-size: 8px; font-weight: 800; line-height: 10px; text-align: center; letter-spacing: .5px; }
```
FILE: fit.js
```js
// Tracks each label so that it fills its measure in data-w.
document.querySelectorAll('[data-w]').forEach(function (el) {
  var range = document.createRange();
  range.selectNodeContents(el);
  var natural = range.getBoundingClientRect().width;
  var count = el.textContent.length;
  el.style.letterSpacing = ((parseFloat(el.dataset.w) - natural) / count) + 'px';
});
```
